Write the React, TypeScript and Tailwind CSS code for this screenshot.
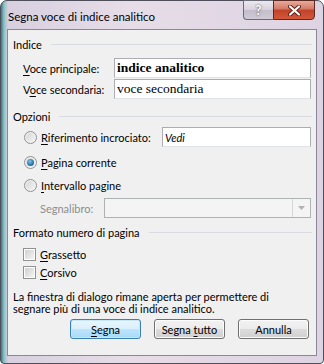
import React from 'react';

const ui = { fontFamily: 'Lato, "Liberation Sans", sans-serif' };
const serif = { fontFamily: '"Liberation Serif", serif' };

function Section({ title, className }: { title: string; className?: string }) {
  return (
    <div className={`flex items-center h-[14px] ${className ?? ''}`}>
      <span className="text-black">{title}</span>
      <div className="flex-1 h-px bg-[#d9dde3] ml-[9px] mr-[-1px]" />
    </div>
  );
}

function Radio({ checked }: { checked?: boolean }) {
  return (
    <span className="flex items-center justify-center w-[13px] h-[13px] rounded-full border border-[#8f9193] bg-[linear-gradient(135deg,#d4d4d4,#f6f6f6)] shadow-[inset_0_0_0_1px_#f4f4f4]">
      {checked && (
        <span className="w-[7px] h-[7px] rounded-full bg-[radial-gradient(circle_at_40%_35%,#7cc4ee,#2a74a6_60%,#14507d)]" />
      )}
    </span>
  );
}

function Check() {
  return (
    <span className="flex items-center justify-center w-[13px] h-[13px] border border-[#8f9193] bg-white">
      <span className="w-[9px] h-[9px] bg-[linear-gradient(135deg,#d0d0d0,#f4f4f4)]" />
    </span>
  );
}

function Btn({ children, def }: { children: React.ReactNode; def?: boolean }) {
  return (
    <button
      className={`w-[71px] h-[20px] rounded-[3px] border text-black flex items-center justify-center ${
        def
          ? 'border-[#3c7fb1] bg-[linear-gradient(#eaf6fd,#d9f0fc_50%,#bee6fd_50%,#a7d9f5)] shadow-[inset_0_0_0_1px_#c5e7f9]'
          : 'border-[#707070] bg-[linear-gradient(#f2f2f2,#ebebeb_50%,#dddddd_50%,#cfcfcf)] shadow-[inset_0_0_0_1px_#fcfcfc]'
      }`}
    >
      <span>{children}</span>
    </button>
  );
}

export default function App() {
  return (
    <div className="w-[324px] h-[364px] overflow-hidden bg-white text-[11px] leading-none" style={ui}>
      <div className="flex flex-col w-full h-full rounded-t-[7px] rounded-b-[4px] border border-[#4f4f5c] bg-[linear-gradient(to_right,#2f7f87,#8cc1c4_3px,#d8d0df_7px,#e6dde8_40%,#ddd3e2)] px-[6px] pb-[7px]">
        {/* Title bar */}
        <div className="flex justify-between h-[28px] shrink-0">
          <span className="pl-[1px] pt-[10px] text-[11.5px] text-black">Segna voce di indice analitico</span>
          <div className="flex -mt-[1px] mr-[2px] h-[20px]">
            <div className="w-[30px] h-full flex items-center justify-center border border-[#6b6b78] border-r-0 rounded-bl-[4px] bg-[linear-gradient(#ece8ef,#d7d1dc_50%,#c3bccb_50%,#d0cad6)] text-white font-bold text-[13px] [text-shadow:0_0_2px_#333]">
              ?
            </div>
            <div className="w-[42px] h-full flex items-center justify-center border border-[#5a2a22] rounded-br-[4px] bg-[linear-gradient(#e9a99a,#d27a66_45%,#c2412a_50%,#d3583b)]">
              <svg width="13" height="11" viewBox="0 0 13 11">
                <path d="M2 1.5 L11 9.5 M11 1.5 L2 9.5" stroke="#5a1f16" strokeWidth="4" strokeLinecap="round" />
                <path d="M2 1.5 L11 9.5 M11 1.5 L2 9.5" stroke="#ffffff" strokeWidth="2.2" strokeLinecap="round" />
              </svg>
            </div>
          </div>
        </div>

        {/* Client area */}
        <div className="flex-1 flex flex-col border border-[#8a8894] bg-[#f0f0f0] pl-[5px] pr-[5px] pt-[7px]">
          <Section title="Indice" />
          <div className="flex items-center h-[20px] mt-[7px] ml-[10px]">
            <span className="w-[91px]">
              <u className="underline-offset-2">V</u>oce principale:
            </span>
            <div className="flex-1 h-full flex items-center border border-[#abadb3] border-b-[#dfe3e8] bg-white px-[2px] text-[13.5px] font-bold" style={serif}>
              indice analitico
            </div>
          </div>
          <div className="flex items-center h-[20px] mt-[1px] ml-[10px]">
            <span className="w-[91px]">
              V<u className="underline-offset-2">o</u>ce secondaria:
            </span>
            <div className="flex-1 h-full flex items-center border border-[#abadb3] border-b-[#dfe3e8] bg-white px-[2px] text-[13.5px]" style={serif}>
              voce secondaria
            </div>
          </div>

          <Section title="Opzioni" className="mt-[10px]" />
          <div className="flex items-center h-[20px] mt-[4px] ml-[11px]">
            <Radio />
            <span className="ml-[4px] w-[121px]">
              <u className="underline-offset-2">R</u>iferimento incrociato:
            </span>
            <div className="flex-1 h-full flex items-center border border-[#abadb3] border-b-[#dfe3e8] bg-white px-[2px] italic">
              Vedi
            </div>
          </div>
          <div className="flex items-center h-[20px] mt-[5px] ml-[11px]">
            <Radio checked />
            <span className="ml-[4px]">
              <u className="underline-offset-2">P</u>agina corrente
            </span>
          </div>
          <div className="flex items-center h-[20px] mt-[3px] ml-[11px]">
            <Radio />
            <span className="ml-[4px]">
              <u className="underline-offset-2">I</u>ntervallo pagine
            </span>
          </div>
          <div className="flex items-center h-[20px] mt-[3px] ml-[27px]">
            <span className="w-[64px] text-[#8d8d8d]">Segnalibro:</span>
            <div className="flex-1 h-full flex justify-end border border-[#adb2b5] bg-[#f4f4f4]">
              <div className="w-[18px] h-full border-l border-[#d4d6d8] flex items-center justify-center">
                <svg width="7" height="4" viewBox="0 0 7 4">
                  <path d="M0 0 H7 L3.5 4 Z" fill="#b2b2b2" />
                </svg>
              </div>
            </div>
          </div>

          <Section title="Formato numero di pagina" className="mt-[7px]" />
          <div className="flex items-center h-[18px] mt-[6px] ml-[10px]">
            <Check />
            <span className="ml-[4px]">
              <u className="underline-offset-2">G</u>rassetto
            </span>
          </div>
          <div className="flex items-center h-[18px] ml-[10px]">
            <Check />
            <span className="ml-[4px]">
              <u className="underline-offset-2">C</u>orsivo
            </span>
          </div>

          <p className="mt-[10px] leading-[12px]">
            La finestra di dialogo rimane aperta per permettere di
            <br />
            segnare più di una voce di indice analitico.
          </p>

          <div className="flex justify-end gap-[13px] mt-[4px] mr-[2px]">
            <Btn def>
              <u className="underline-offset-2">S</u>egna
            </Btn>
            <Btn>
              Segna <u className="underline-offset-2">t</u>utto
            </Btn>
            <Btn>Annulla</Btn>
          </div>
        </div>
      </div>
    </div>
  );
}
